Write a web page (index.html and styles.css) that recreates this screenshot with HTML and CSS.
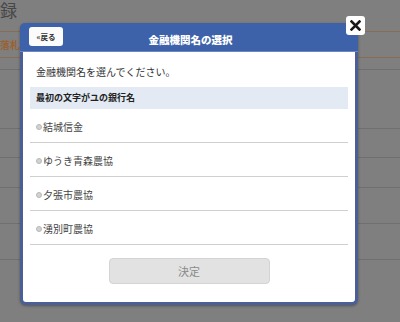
FILE: index.html
```html
<!DOCTYPE html>
<html lang="ja">
<head>
<meta charset="utf-8">
<link rel="stylesheet" href="styles.css">
</head>
<body>
<div class="page">
  <div class="bg-title">録</div>
  <div class="bg-box"><span class="bg-tag">落札</span></div>
  <div class="bg-row h11"></div>
  <div class="bg-row h58"></div>
  <div class="bg-row h28"></div>
  <div class="bg-row h29"></div>
  <div class="bg-row h35"></div>
  <div class="bg-row h35"></div>
</div>

<div class="modal">
  <div class="modal-head">
    <button class="back">«戻る</button>
    <div class="title">金融機関名の選択</div>
    <span class="spacer"></span>
  </div>
  <div class="modal-body">
    <p class="lead">金融機関名を選んでください。</p>
    <div class="section">最初の文字がユの銀行名</div>
    <ul class="list">
      <li class="item"><span class="radio"></span>結城信金</li>
      <li class="item"><span class="radio"></span>ゆうき青森農協</li>
      <li class="item"><span class="radio"></span>夕張市農協</li>
      <li class="item"><span class="radio"></span>湧別町農協</li>
    </ul>
    <div class="actions"><button class="submit" disabled>決定</button></div>
  </div>
</div>
<button class="close" aria-label="閉じる">
  <svg width="11" height="11" viewBox="0 0 11 11"><path d="M1.5 1.5 L9.5 9.5 M9.5 1.5 L1.5 9.5" stroke="#1a1a1a" stroke-width="2.6" stroke-linecap="square"/></svg>
</button>
</body>
</html>
```
FILE: styles.css
```css
html, body {
  margin: 0;
  padding: 0;
}
body {
  width: 400px;
  height: 322px;
  overflow: hidden;
  background: #7f7f7f;
  font-family: "Noto Sans CJK JP", "Noto Sans", sans-serif;
  position: relative;
}
.page {
  width: 400px;
}
.bg-title {
  height: 31px;
  font-size: 17px;
  line-height: 20px;
  color: #474747;
  white-space: nowrap;
}
.bg-box {
  height: 25px;
  border-top: 1px solid #8a6b55;
  border-bottom: 1px solid #8a6b55;
  display: flex;
  align-items: center;
}
.bg-tag {
  font-size: 10px;
  font-weight: bold;
  color: #9a6234;
  line-height: 12px;
}
.bg-row {
  border-bottom: 1px solid #6f6f6f;
}
.h11 { height: 11px; }
.h58 { height: 58px; }
.h28 { height: 28px; }
.h29 { height: 29px; }
.h35 { height: 35px; }

.modal {
  position: absolute;
  left: 20px;
  top: 23px;
  width: 338px;
  box-sizing: border-box;
  border: 3px solid #4a5f96;
  border-top: 0;
  border-radius: 6px;
  background: #fff;
  box-shadow: 0 1px 3px rgba(0, 0, 0, 0.35);
}
.modal-head {
  margin: 0 -3px;
  height: 29px;
  background: #3e62aa;
  border-radius: 5px 5px 0 0;
  display: flex;
  align-items: flex-start;
  padding: 4px 6px 0 9px;
  box-sizing: border-box;
  border-bottom: 1px solid #6d88c0;
}
.back {
  width: 34px;
  height: 19px;
  padding: 0;
  border: 0;
  border-radius: 3px;
  background: #fbfbfb;
  font-family: inherit;
  font-size: 7.5px;
  font-weight: bold;
  color: #333;
  line-height: 19px;
}
.title {
  flex: 1;
  text-align: center;
  color: #fff;
  font-size: 10.5px;
  font-weight: 900;
  line-height: 25px;
}
.spacer {
  width: 34px;
}
.modal-body {
  padding: 0 7px 18px;
}
.lead {
  margin: 0;
  padding: 14px 0 9px 6px;
  font-size: 10px;
  line-height: 12px;
  color: #333;
}
.section {
  height: 22px;
  line-height: 21px;
  background: #e3eaf3;
  padding-left: 6px;
  font-size: 9px;
  font-weight: bold;
  color: #222;
}
.list {
  list-style: none;
  margin: 0;
  padding: 0;
}
.item {
  height: 34px;
  box-sizing: border-box;
  border-bottom: 1px solid #cfcfcf;
  display: flex;
  align-items: center;
  padding: 2px 0 0 6px;
  font-size: 10px;
  color: #444;
}
.radio {
  width: 6px;
  height: 6px;
  border-radius: 50%;
  background: #d2d2d2;
  border: 0.5px solid #b8b8b8;
  margin-right: 1px;
  box-sizing: border-box;
}
.actions {
  display: flex;
  justify-content: center;
  padding-top: 13px;
}
.submit {
  width: 161px;
  height: 26px;
  border: 1px solid #d4d4d4;
  border-radius: 4px;
  background: #e2e2e2;
  color: #8a8a8a;
  font-family: inherit;
  font-size: 11px;
  padding: 0;
}
.close {
  position: absolute;
  left: 346px;
  top: 16px;
  width: 19px;
  height: 19px;
  padding: 0;
  border: 0;
  border-radius: 3px;
  background: #fff;
  display: flex;
  align-items: center;
  justify-content: center;
}
```
